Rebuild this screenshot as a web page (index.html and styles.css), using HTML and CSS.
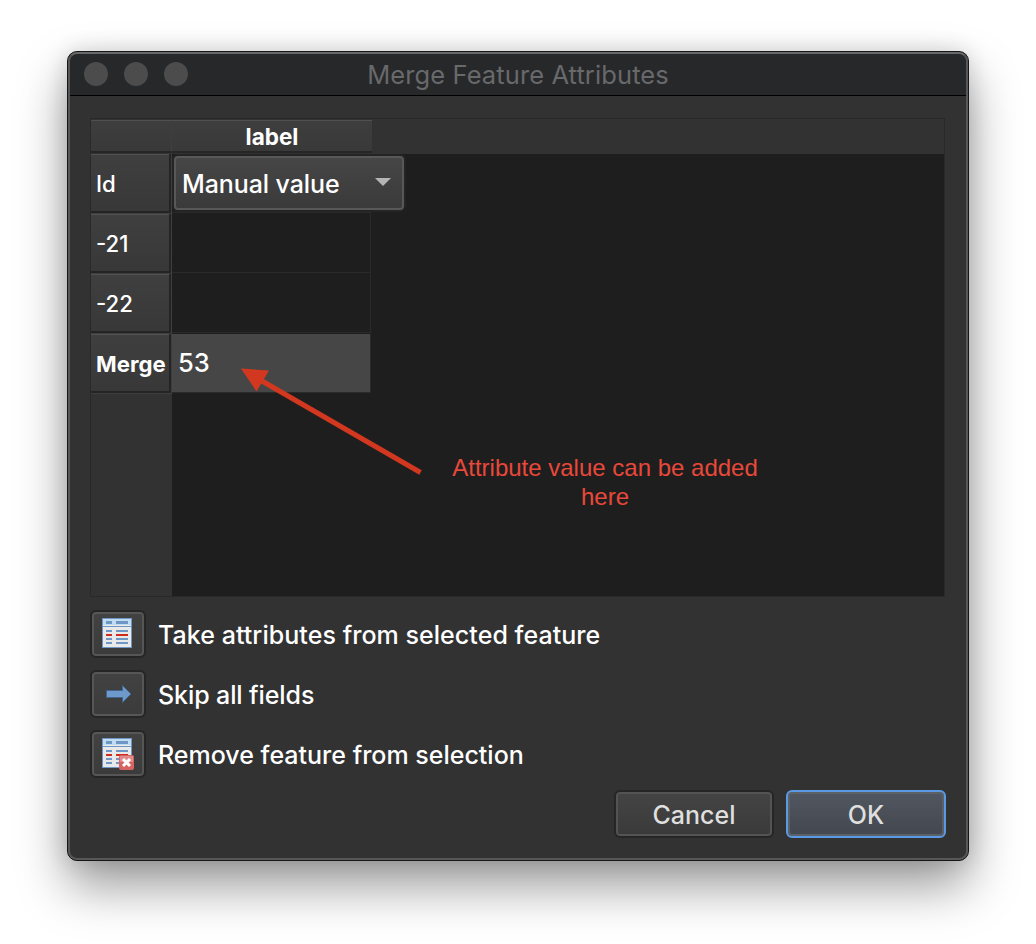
FILE: index.html
```html
<!DOCTYPE html>
<html lang="en">
<head>
<meta charset="utf-8">
<title>Merge Feature Attributes</title>
<link rel="stylesheet" href="styles.css">
</head>
<body>
<main class="dialog">
  <header class="titlebar">
    <div class="lights"><i></i><i></i><i></i></div>
    <h1 class="title">Merge Feature Attributes</h1>
  </header>
  <div class="content">
    <section class="table">
      <div class="head-row">
        <div class="corner"></div>
        <div class="col-head">label</div>
      </div>
      <div class="table-body">
        <div class="row-heads">
          <div class="row-head id">Id</div>
          <div class="row-head">-21</div>
          <div class="row-head">-22</div>
          <div class="row-head merge">Merge</div>
        </div>
        <div class="cells">
          <div class="cell first"><div class="combo"><span>Manual value</span><i class="caret"></i></div></div>
          <div class="cell"></div>
          <div class="cell"></div>
          <div class="cell selected">53</div>
        </div>
      </div>
      <svg class="arrow" width="190" height="114" viewBox="235 363 190 114">
        <path d="M262 381L420.500 472.500" stroke="#d2381f" stroke-width="5"/>
        <path d="M241 368.500L269 370.500L256.500 391.500Z" fill="#d2381f"/>
      </svg>
      <p class="note">Attribute value can be added<br>here</p>
    </section>
    <div class="actions">
      <div class="action">
        <button class="tool"><svg width="34" height="34" viewBox="0 0 34 34">
          <rect x="1.500" y="1.500" width="29" height="29" fill="#e9e9e9" stroke="#6f97c6"/>
          <path d="M2 2H30V8H2Z" fill="#bfdcf1"/><path d="M2 9.500H30" stroke="#6f97c6"/>
          <path d="M5 5.500H11M15 5.500H27" stroke="#6f97c6" stroke-width="3"/>
          <path d="M5 14H11M15 14H27M5 22H11M15 22H27M5 26H11M15 26H27" stroke="#6f97c6" stroke-width="2"/>
          <path d="M5 18H11M15 18H27" stroke="#cf2a1c" stroke-width="2"/>
        </svg></button>
        <span class="t1">Take attributes from selected feature</span>
      </div>
      <div class="action">
        <button class="tool"><svg width="34" height="34" viewBox="0 0 34 34">
          <path d="M5.500 13.500H21.500V8.500L30 17L21.500 25.500V20.500H5.500Z" fill="#6d99cb" stroke="#41658c"/>
        </svg></button>
        <span class="t2">Skip all fields</span>
      </div>
      <div class="action">
        <button class="tool"><svg width="34" height="34" viewBox="0 0 34 34">
          <rect x="1.500" y="1.500" width="29" height="29" fill="#e9e9e9" stroke="#6f97c6"/>
          <path d="M2 2H30V8H2Z" fill="#bfdcf1"/><path d="M2 9.500H30" stroke="#6f97c6"/>
          <path d="M5 5.500H11M15 5.500H27" stroke="#6f97c6" stroke-width="3"/>
          <path d="M5 14H11M15 14H27M5 22H11M15 22H27M5 26H11M15 26H27" stroke="#6f97c6" stroke-width="2"/>
          <path d="M5 18H11M15 18H27" stroke="#cf2a1c" stroke-width="2"/>
          <rect x="18" y="18" width="15" height="15" rx="2" fill="#d66363"/>
          <path d="M19 19H32V25H19Z" fill="#e08a89"/>
          <path d="M22 22L29 29M29 22L22 29" stroke="#fff" stroke-width="3"/>
        </svg></button>
        <span class="t3">Remove feature from selection</span>
      </div>
    </div>
    <footer class="buttons">
      <button class="btn cancel"><span>Cancel</span></button>
      <button class="btn ok"><span>OK</span></button>
    </footer>
  </div>
</main>
</body>
</html>
```
FILE: styles.css
```css
* { box-sizing: border-box; }
body { margin: 0; width: 1036px; height: 944px; overflow: hidden; background: #fff; padding: 51px 67px; font-family: Inter, "Liberation Sans", sans-serif; font-size: 25px; color: #fff; }
button { font: inherit; color: inherit; margin: 0; padding: 0; }
.dialog { position: relative; width: 902px; height: 810px; border: 1px solid #161616; border-radius: 10px; background: #323232; box-shadow: 0 25px 50px rgba(0,0,0,.4), 0 0 22px rgba(0,0,0,.14); }
.dialog::after { content: ""; position: absolute; inset: 0; border: 2px solid #575757; border-top-color: #66686a; border-radius: 9px; pointer-events: none; }
.titlebar { height: 44px; display: grid; grid-template-columns: 150px 1fr 150px; align-items: center; background: #27282a; border-bottom: 1px solid #000; border-radius: 9px 9px 0 0; }
.lights { display: flex; gap: 16px; padding-left: 16px; }
.lights i { width: 24px; height: 24px; border-radius: 50%; background: #4b4c4b; }
.title { margin: 3px 0 0; text-align: center; font-size: 25.5px; letter-spacing: .1px; line-height: 30px; font-weight: 400; color: #68696b; white-space: nowrap; }
.content { padding: 22px 22px 0; }
.table { position: relative; width: 855px; height: 479px; border: 1px solid #292929; background: #1e1e1e; display: flex; flex-direction: column; }
.head-row { height: 35px; background: #323232; display: flex; padding-top: 1px; font-size: 22.5px; font-weight: 700; }
.corner, .col-head { height: 33px; background: linear-gradient(#3e3e3e, #393939); border-top: 1px solid #505050; border-bottom: 2px solid #262626; }
.corner { width: 80px; }
.col-head { width: 201px; border-left: 1px solid #3e3e3e; text-align: center; line-height: 31px; }
.table-body { flex: 1; display: flex; }
.row-heads { width: 81px; background: #323232; }
.row-head { height: 60px; border-bottom: 1px solid #3e3e3e; border-right: 1px solid #3e3e3e; padding-left: 5px; font-size: 22.2px; font-weight: 500; line-height: 60px; background: linear-gradient(#515151 1px, #3f3f3f 1px, #383838 57px, #242424 57px); box-shadow: inset -2px 0 #242424; white-space: nowrap; }
.merge { font-weight: 700; }
.cells { width: 199px; }
.cell { height: 60px; border-right: 1px solid #2a2a2a; border-bottom: 1px solid #2a2a2a; }
.first { height: 59px; padding: 2px; border-right: 0; }
.combo { width: 230px; height: 54px; border: 2px solid #585858; border-radius: 4px; background: linear-gradient(#464646, #3a3a3a); box-shadow: 0 0 0 2px #242424; display: flex; align-items: center; justify-content: space-between; padding: 2px 11px 0 6px; font-weight: 500; letter-spacing: -.1px; }
.caret { border: 8px solid transparent; border-top-color: #b5b5b5; border-bottom: 0; margin-bottom: 4px; }
.selected { background: #464646; background-clip: padding-box; padding-left: 6px; font-size: 25.5px; font-weight: 500; line-height: 57px; height: 60px; border-top: 1px solid #1e1e1e; }
.arrow { position: absolute; left: 144px; top: 244px; }
.note { position: absolute; left: 354px; top: 334px; width: 320px; margin: 0; text-align: center; font: 24px/29px "Liberation Sans", sans-serif; color: #e8483a; white-space: nowrap; }
.actions { padding-top: 13px; display: flex; flex-direction: column; gap: 12px; }
.action { height: 48px; display: flex; align-items: center; gap: 12px; font-weight: 500; white-space: nowrap; }
.action span { padding-top: 2px; }
.t1 { letter-spacing: .05px; }
.t2 { letter-spacing: -.1px; }
.tool { width: 56px; height: 48px; border: 2px solid #262626; border-radius: 6px; background: linear-gradient(#424242, #3b3b3b); box-shadow: inset 0 0 0 2px #565656; display: flex; align-items: center; justify-content: center; padding-right: 1px; }
.buttons { display: flex; justify-content: flex-end; gap: 12px; margin-top: 12px; padding-right: 0; }
.btn { width: 160px; height: 48px; padding-top: 2px; border: 2px solid #262626; border-radius: 6px; background: linear-gradient(#444, #3a3a3a); box-shadow: inset 0 0 0 2px #535353; font-weight: 500; color: #dfdfdf; }
.ok { border-color: #5a9ae5; background: linear-gradient(#515760, #43474f); box-shadow: inset 0 0 0 2px #5c6168; }
```
